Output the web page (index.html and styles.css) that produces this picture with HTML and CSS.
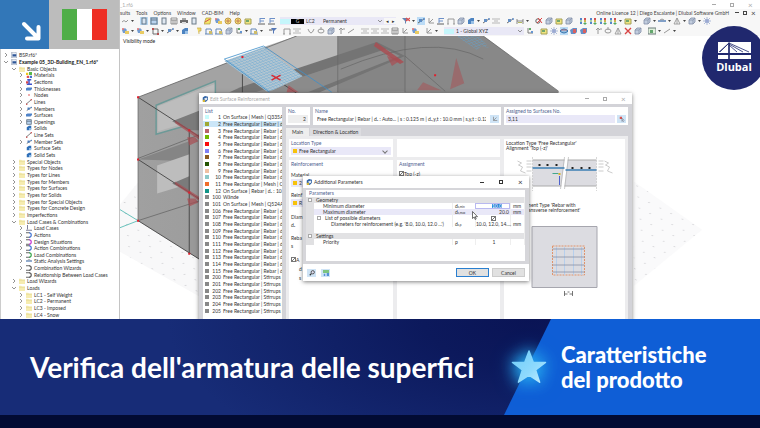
FILE: index.html
```html
<!DOCTYPE html>
<html lang="it">
<head>
<meta charset="utf-8">
<meta name="viewport" content="width=device-width, initial-scale=1">
<title>Verifica dell'armatura delle superfici</title>
<link rel="stylesheet" href="styles.css">
</head>
<body>
<svg class="defs" aria-hidden="true">
  <symbol id="i-redo" viewBox="0 0 8 8"><path d="M1 5q2-3 4 0l2-2" fill="none" stroke="#888"/></symbol>
  <symbol id="i-panel" viewBox="0 0 8 8"><rect x="2" y="1" width="4" height="6" fill="#dde6f0" stroke="#567"/></symbol>
  <symbol id="i-panelw" viewBox="0 0 8 8"><rect x="1" y="1" width="6" height="6" fill="#b9d3ee" stroke="#567"/><path d="M1 3h6" stroke="#567"/></symbol>
  <symbol id="i-table" viewBox="0 0 8 8"><path d="M1 1h6v6H1zM1 3h6M3 3v4M5 3v4" fill="none" stroke="#666" stroke-width=".8"/></symbol>
  <symbol id="i-print" viewBox="0 0 8 8"><path d="M2 1h4v2H2z" fill="#999"/><path d="M0 3h8v3H0z" fill="#555"/><path d="M2 5h4v2H2z" fill="#ddd"/></symbol>
  <symbol id="i-yel" viewBox="0 0 8 8"><path d="M2 1h5L6 7H0z" fill="#f3e14e" stroke="#a58a20" stroke-width=".7"/><path d="M1 5l5-3" stroke="#c33"/></symbol>
  <symbol id="i-yelr" viewBox="0 0 8 8"><circle cx="4" cy="4" r="3" fill="#f6e05c" stroke="#b78a30"/><path d="M2 4h4M4 2v4" stroke="#b0503a" stroke-width=".8"/></symbol>
  <symbol id="i-yelg" viewBox="0 0 8 8"><path d="M1 2h6v5H1z" fill="#f1e36b" stroke="#97903c"/><path d="M2 3h3v2H2z" fill="#5c9a54"/></symbol>
  <symbol id="i-load" viewBox="0 0 8 8"><path d="M2 1v5M2 1.500h5M2 4h4" stroke="#557fc0" fill="none"/><path d="M0 7h7" stroke="#444"/></symbol>
  <symbol id="i-cube" viewBox="0 0 8 8"><path d="M1 3l2-2h4v4L5 7H1z" fill="#b9c6da" stroke="#6d7c99" stroke-width=".8"/><path d="M1 3h4v4M5 3l2-2" fill="none" stroke="#6d7c99" stroke-width=".7"/></symbol>
  <symbol id="i-blue" viewBox="0 0 8 8"><path d="M1 3l3-2h3v4L4 7H1z" fill="#2f6fb8"/><path d="M4 4h3v3H4z" fill="#8bb8e4"/></symbol>
  <symbol id="i-filter" viewBox="0 0 8 8"><path d="M0 1h6L4 4v3L3 6V4z" fill="#4d6fa5"/><path d="M4 1l4 3M8 1L4 4" stroke="#d92d2d" stroke-width="1.200"/></symbol>
  <symbol id="i-filterb" viewBox="0 0 8 8"><path d="M2 1h6L5 4v3L4 6V4z" fill="#3b63ad"/><path d="M0 3h3" stroke="#333"/></symbol>
  <symbol id="i-beam" viewBox="0 0 8 8"><path d="M1 6l6-4" stroke="#555"/><path d="M2 2h3v3H2z" fill="#4b7dbc"/><circle cx="7" cy="2" r="1" fill="#4b7dbc"/></symbol>
  <symbol id="i-frame" viewBox="0 0 8 8"><path d="M1 7V2h6v5M0 7h2M6 7h2" fill="none" stroke="#888"/></symbol>
  <symbol id="i-grid" viewBox="0 0 8 8"><path d="M0 2h8M0 6h8M2 4h4" stroke="#999" stroke-width=".8"/></symbol>
  <symbol id="i-node" viewBox="0 0 8 8"><path d="M1 3l3-2 2 2-2 3H2z" fill="#5b8ccb"/><path d="M4 4h4v3H4z" fill="#e7c449"/><circle cx="2" cy="2" r="1" fill="#d55"/></symbol>
  <symbol id="i-nodes" viewBox="0 0 8 8"><path d="M2 2h5v5H2z" fill="none" stroke="#555"/><path d="M1 1h2v2H1zM6 6h2v2H6z" fill="#a33"/></symbol>
  <symbol id="i-flag" viewBox="0 0 8 8"><path d="M2 1h4v3H4v3" fill="#f0d452" stroke="#b99a2d" stroke-width=".7"/></symbol>
  <symbol id="i-mem" viewBox="0 0 8 8"><path d="M1 7V2h5l1 4M0 7h8" fill="none" stroke="#4b74ad"/><path d="M4 4h3v3H4z" fill="#c9b250"/></symbol>
  <symbol id="i-green" viewBox="0 0 8 8"><path d="M2 1v5h5" fill="none" stroke="#666"/><path d="M3 1h2v2H3z" fill="#44a04b"/><path d="M5 4h2v2H5z" fill="#4c86cc"/></symbol>
  <symbol id="i-axis" viewBox="0 0 8 8"><path d="M2 1v5h5M2 6L6 2" fill="none" stroke="#888"/></symbol>
  <symbol id="i-zoomx" viewBox="0 0 8 8"><circle cx="3" cy="4" r="2.200" fill="none" stroke="#444"/><path d="M3 1l4 5M7 1L2 6" stroke="#d22"/></symbol>
  <symbol id="i-find" viewBox="0 0 8 8"><circle cx="5" cy="3" r="2.200" fill="#dde" stroke="#333"/><path d="M3 5L1 7" stroke="#333" stroke-width="1.500"/></symbol>
  <symbol id="i-pick" viewBox="0 0 8 8"><path d="M1 1h3v3H1z" fill="#d9534f"/><path d="M4 3v4l1-1 1 2M4 3l3 3" fill="none" stroke="#667" stroke-width=".8"/></symbol>
  <symbol id="i-xyz" viewBox="0 0 8 8"><path d="M1 1h2v2H1zM1 5h2v2H1z" fill="#3973c4"/><path d="M5 1h2v2H5z" fill="#c33"/><path d="M5 3h2v2H5z" fill="#caa92e"/><path d="M5 6h2v1H5zM2 3v2" fill="#3a9b48" stroke="#3a9b48"/></symbol>
  <symbol id="i-wave" viewBox="0 0 8 8"><path d="M0 4h8" stroke="#3f6fae" stroke-width="1.500"/><path d="M2 3l2-1 2 1" stroke="#888" fill="none"/></symbol>
  <symbol id="i-curve" viewBox="0 0 8 8"><path d="M1 2q3 8 6 0" fill="none" stroke="#888"/></symbol>
  <symbol id="i-arrow" viewBox="0 0 8 8"><path d="M4 7V2M2 3l2-2 2 2M6 2h2" fill="none" stroke="#888"/></symbol>
  <symbol id="i-line" viewBox="0 0 8 8"><path d="M1 6l6-4" stroke="#888"/></symbol>
  <symbol id="i-dim" viewBox="0 0 8 8"><path d="M1 2v5M7 2v5M1 4h6" stroke="#555" stroke-width=".8"/><path d="M2 5h4v1H2z" fill="#a7ad48"/></symbol>
  <symbol id="i-star" viewBox="0 0 8 8"><path d="M4 0v8M0 4h8M1 1l6 6M7 1L1 7" stroke="#7d92c4" stroke-width=".7"/><circle cx="4" cy="4" r="2" fill="#8b9ccc"/></symbol>
  <symbol id="i-redcube" viewBox="0 0 8 8"><path d="M0 3l3-2h4v4L5 7H1z" fill="#4d7fc0"/><path d="M3 2h3v4H3z" fill="#d24848"/></symbol>
  <symbol id="i-eye" viewBox="0 0 8 8"><path d="M0 4q4-4 8 0-4 4-8 0z" fill="#8fb9dc" stroke="#205f9d"/><path d="M1 3h6" stroke="#c55" stroke-width=".8"/></symbol>
  <symbol id="i-x" viewBox="0 0 8 8"><path d="M1 1l6 6M7 1L1 7" stroke="#d32626" stroke-width="1.400"/></symbol>
  <symbol id="i-tri" viewBox="0 0 8 8"><path d="M4 1L1 7h6zM4 1v6" fill="none" stroke="#888" stroke-width=".9"/></symbol>
  <symbol id="i-loop" viewBox="0 0 8 8"><ellipse cx="4" cy="4" rx="3" ry="2" fill="none" stroke="#888"/><path d="M4 0v3" stroke="#888"/></symbol>
  <symbol id="i-pic" viewBox="0 0 8 8"><path d="M0 1h8v6H0z" fill="#dff0d9" stroke="#566"/><path d="M2 3h3v3H2z" fill="#4a9a55"/></symbol>
  <symbol id="i-units" viewBox="0 0 8 8"><path d="M0 0h8v4H0z" fill="#7cc47f"/><path d="M1 5h2v3H1zM5 4h3v4H5z" fill="#5591d6"/></symbol>
  <symbol id="i-folder" viewBox="0 0 8 8"><path d="M0 1h3l1 1h4v6H0z" fill="#f6ecb0"/><path d="M0 3h8" stroke="#e3d68c" stroke-width=".8"/></symbol>
  <symbol id="i-model" viewBox="0 0 8 8"><path d="M1 0h5l2 2v6H1z" fill="#e9edf4" stroke="#7c8aa0" stroke-width=".8"/><path d="M2 3h5v3H2z" fill="#2e5697"/></symbol>
  <symbol id="i-mat" viewBox="0 0 8 8"><path d="M0 1h3v3H0z" fill="#f0c81e"/><path d="M4 0h4v4H4z" fill="#59b84c"/><path d="M1 5h3v3H1z" fill="#e4514e"/><path d="M5 5h3v3H5z" fill="#4773cc"/></symbol>
  <symbol id="i-sec" viewBox="0 0 8 8"><path d="M2 0h5v2H5v4h3v2H1V6h2V2H1z" fill="#4052c9"/><path d="M0 3h3v3H0z" fill="#d8484b"/></symbol>
  <symbol id="i-thick" viewBox="0 0 8 8"><path d="M0 3l2-1h6v2L6 6H0z" fill="#4f83c8"/></symbol>
  <symbol id="i-dot" viewBox="0 0 8 8"><circle cx="4" cy="4" r="1" fill="#d33"/></symbol>
  <symbol id="i-ln" viewBox="0 0 8 8"><path d="M0 7l7-6" stroke="#555"/><circle cx="1" cy="7" r="1" fill="#c44"/><circle cx="7" cy="1" r="1" fill="#c44"/></symbol>
  <symbol id="i-case" viewBox="0 0 8 8"><path d="M2 0v6M0 7h8" stroke="#557" fill="none"/></symbol>
  <symbol id="i-comb" viewBox="0 0 8 8"><path d="M0 1h5M0 7h5" stroke="#333"/><path d="M4 1q3 0 3 3t-3 3" fill="none" stroke="currentColor" stroke-width="1.500"/></symbol>
  <symbol id="i-app" viewBox="0 0 8 8"><path d="M1 2l3-2 4 1v4L5 8 1 6z" fill="#2f62a5"/><path d="M3 3l4-1v3L4 6z" fill="#dfe8f3"/><path d="M1 5h3v3H1z" fill="#d4b63c"/></symbol>
</svg>

<main class="stage">
  <aside class="sidebar"><ul class="tree" id="tree"></ul></aside>

  <section class="work">
    <header class="chrome">
      <div class="caption"><span>_1.rf6</span><span class="win muted"><i class="min"></i><i class="max"></i><i class="cls">×</i></span></div>
      <nav class="menu">
        <a href="#">sults</a><a href="#">Tools</a><a href="#">Options</a><a href="#">Window</a><a href="#">CAD-BIM</a><a href="#">Help</a>
        <span class="licence">Online Licence 12 | Diego Escalante | Dlubal Software GmbH</span>
        <span class="win"><i class="min"></i><i class="max"></i><i class="cls">×</i></span>
      </nav>
      <div class="bar" id="bar1"></div>
      <div class="bar" id="bar2"></div>
    </header>
    <div class="view">
      <svg class="scene" viewBox="120 37 640 282" preserveAspectRatio="xMinYMin slice" aria-hidden="true">
        <defs>
          <pattern id="dots" width="11" height="11" patternUnits="userSpaceOnUse" patternTransform="matrix(1 .5 -.9 .5 0 0)"><circle cx="5" cy="5" r=".6" fill="#c4c4c8"/></pattern>
          <pattern id="mesh" width="3" height="3" patternUnits="userSpaceOnUse" patternTransform="matrix(.94 -.36 .8 .58 0 0)"><path d="M0 0h3M0 0v3" stroke="#5ea3d2" stroke-width=".7"/></pattern>
          <linearGradient id="wall" x1="0" x2="1"><stop offset="0" stop-color="#a0a0a0"/><stop offset="1" stop-color="#8a8a8a"/></linearGradient>
        </defs>
        <path d="M120 205l18-22 62 40v74l-80-45z" fill="#f8f8f9"/>
        <path d="M120 205l18-22 62 40v74l-80-45z" fill="url(#dots)"/>
        <path d="M632 182l68 48-68 56z" fill="#fafafb"/>
        <path d="M632 182l68 48-68 56z" fill="url(#dots)"/>
        <path d="M138 98L296 37h186l75 55v70H200v98l-62-39z" fill="url(#wall)"/>
        <path d="M138 98L296 37h41v26l-95 36-42 39z" fill="#a3a3a3"/>
        <path d="M263 48l33-11h41v25l-42 15-32-29z" fill="#bababa"/>
        <path d="M337 37h67v55l-67 1z" fill="#858585"/>
        <path d="M404 37h78l75 56H404z" fill="#888"/>
        <path d="M240 88l136-45 28 14-85 36h-90z" fill="#747474"/>
        <path d="M255 93l130-43 14 7-92 36z" fill="#8b8b8b"/>
        <path d="M138 160l62-22v24l-62-2z" fill="#858585"/>
        <path d="M156 106l59-24v36l-59 17z" fill="#b2b2b2" stroke="#6c9997" stroke-width="1.500"/>
        <path d="M158 107l56-22v30l-56 17z" fill="#bdbdbd"/>
        <path d="M157 166l43-15v30l-43 13z" fill="#bdbdbd"/>
        <path d="M172 122l28-11v27zM172 184l28-12v27z" fill="#7b7b7b"/>
        <path d="M189 131h11v129l-11-7z" fill="#999"/>
        <path d="M138 98L296 37M138 98v123M138 159l62-24M138 221l62-20" fill="none" stroke="#686868" stroke-width=".8"/>
        <path d="M138 98l62 40M138 160l62 40M138 221l62 39M189 131v123M242 58l54 36M242 58v35" fill="none" stroke="#444" stroke-width=".9"/>
        <path d="M337 37v56M404 37v56M340 70q90-38 142-10M404 57l40 35M482 37l75 55" fill="none" stroke="#666" stroke-width=".7"/>
        <g fill="#a94d52">
          <path d="M375 43l28 20-4 2-26-18z" opacity=".85"/><path d="M386 57l14 4-9 6zM288 86l10 7h-12zM175 121l25 16v4l-25-17zM187 138h8l3 4-9 4zM175 182l25 16v4l-25-17zM187 199h8l3 4-9 4z" opacity=".7"/>
          <path d="M455 59l-6 31 14-6zM416 91l6-8 18 8z" opacity=".5"/>
        </g>
        <path d="M224 62l39-14 39 29-30 14-6 1z" fill="#b4c6d1"/>
        <path d="M224 62l39-14 39 29-30 14-6 1z" fill="url(#mesh)"/>
        <path d="M224 60l39-13 68 46M224 60l45 33" fill="none" stroke="#3d8fc9" stroke-width=".8"/>
        <path d="M271 76l9 5m-9 0l9-5" stroke="#d52c35" stroke-width="1.500"/>
        <path d="M455 37h23l10 12-8-2-4 4z" fill="url(#mesh)"/>
        <path d="M120 210l18 11-18 7" fill="none" stroke="#45b5ae" stroke-width=".8"/>
        <path d="M137 97h2v2h-2zM137 159h2v2h-2zM137 220h2v2h-2zM241 57h2v2h-2zM188 130h2v2h-2zM188 192h2v2h-2zM188 253h2v2h-2zM433 75h2v2h-2z" fill="#e01f2d"/>
      </svg>
      <p class="mode">Visibility mode</p>
    </div>
  </section>

  <section class="window editor" aria-label="Edit Surface Reinforcement">
    <header class="wtitle muted"><svg class="ic"><use href="#i-app"/></svg><span>Edit Surface Reinforcement</span><span class="win"><i class="min"></i><i class="max"></i><i class="cls">×</i></span></header>
    <div class="ebody">
      <div class="panel listpanel"><h3>List</h3><ul class="list" id="list"></ul></div>
      <div class="eright">
        <div class="heads">
          <div class="panel"><label for="no">No.</label><input id="no" class="grey" value="2"></div>
          <div class="panel"><label for="nm">Name</label><div class="line"><input id="nm" value="Free Rectangular | Rebar | dₛ : Auto... | s : 0.125 m | dₛ,y,t : 10.0 mm | s,y,t : 0.125 m | Top"><button class="sq" aria-label="Edit name"><svg class="ic"><use href="#i-axis"/></svg></button></div></div>
          <div class="panel"><label for="as">Assigned to Surfaces No.</label><div class="line"><input id="as" class="lilac" value="3,11"><button class="sq" aria-label="Select"><svg class="ic"><use href="#i-pick"/></svg></button></div></div>
        </div>
        <div class="tabs"><button class="on">Main</button><button>Direction &amp; Location</button></div>
        <div class="content">
          <div class="col">
            <div class="panel top"><label for="lt">Location Type</label><div class="pick"><b class="sw"></b><select id="lt"><option>Free Rectangular</option></select></div></div>
            <div class="panel fill"><h3>Reinforcement</h3>
              <label class="blk" for="mt">Material</label><div class="pick"><b class="sw"></b><select id="mt"><option>2</option></select></div>
              <label class="blk" for="rt">Reinf</label><div class="pick"><b class="sw"></b><select id="rt"><option>R</option></select></div>
              <p class="blk">Diam</p><p class="in">dₛ</p><p class="blk">Reba</p><p class="in">s</p>
              <label class="chk"><input type="checkbox" checked>A</label><p class="sub">d</p><p class="sub">s</p>
            </div>
          </div>
          <div class="col">
            <div class="panel top"></div>
            <div class="panel fill"><h3>Assignment</h3><label class="chk tight"><input type="checkbox" checked>Top (-z)</label></div>
          </div>
          <div class="panel preview">
            <p>Location Type 'Free Rectangular'<br>Alignment 'Top (-z)'</p>
            <svg viewBox="507 152 116 52" class="sect" aria-hidden="true">
              <path d="M533 161h64v26h-64z" fill="#dcdce1"/><path d="M533 161h64M533 187h64" stroke="#aaa"/>
              <path d="M533 158v34M597 158v34" stroke="#c7c7c7" stroke-dasharray="2 1" stroke-width=".7"/>
              <path d="M567 158l-4 32" stroke="#fff" stroke-width="3"/><path d="M569 158l-4 32M565 158l-4 32" stroke="#aaa" stroke-width=".6"/>
              <path d="M533 169h32M566 171h31" stroke="#3c7fb4" stroke-width="1.300"/>
              <path d="M539 165h2v2h-2zM547 165h2v2h-2zM556 165h2v2h-2zM572 168h2v2h-2zM581 168h2v2h-2zM589 168h2v2h-2z" fill="#222"/>
              <path d="M553 174.500h6" stroke="#41a78c"/><path d="M559 174h2v2h-2z" fill="#d8b62c"/><path d="M560 177v9" stroke="#4e62cc"/>
              <g stroke="#aaa" stroke-width=".6" fill="none"><path d="M527 162h5M527 165h5M527 168h5M527 172h5M599 162h5M599 165h5M599 168h5M599 172h5"/><path d="M518 162l4 2-3 2 4 2-2 4 5 2M605 162l4 2-3 2 4 2-2 4 5 2"/></g>
            </svg>
            <p>Reinforcement Type 'Rebar with<br>without transverse reinforcement'</p>
            <svg viewBox="507 213 116 104" class="plan" aria-hidden="true">
              <path d="M532.500 226.500h65v61h-65z" fill="#dcdce1" stroke="#a6a6ae"/>
              <path d="M553 246h32v29h-32z" fill="none" stroke="#e0946c" stroke-dasharray="2 1"/>
              <path d="M557 247v28M565 247v28M574 247v28M582 247v28" stroke="#b7cfec"/><path d="M553 249h32M553 257h32M553 265h32M553 272h32" stroke="#8991a5" stroke-width=".8"/>
              <path d="M565 291v5M573 291v5M565 294h3M570 294h3M568 292h2" stroke="#555" stroke-width=".8"/>
            </svg>
          </div>
        </div>
      </div>
    </div>
  </section>

  <section class="window params" aria-label="Additional Parameters">
    <header class="wtitle"><svg class="ic"><use href="#i-app"/></svg><span>Additional Parameters</span><span class="win"><i class="min"></i><i class="max"></i><i class="cls">×</i></span></header>
    <div class="pbody"><h3>Parameters</h3>
      <table>
        <colgroup><col class="c-tree"><col><col class="c-sym"><col class="c-val"><col class="c-unit"></colgroup>
        <tr class="grp"><th><i class="pm"></i></th><td colspan="4">Geometry</td></tr>
        <tr><th></th><td class="l1">Minimum diameter</td><td>d<sub>s,min</sub></td><td class="v ed"><input aria-label="Minimum diameter" value="10.0"></td><td>mm</td></tr>
        <tr class="hot"><th></th><td class="l1">Maximum diameter</td><td>d<sub>s,max</sub></td><td class="v">20.0</td><td>mm</td></tr>
        <tr><th></th><td class="l0"><i class="pm"></i>List of possible diameters</td><td></td><td class="c"><input type="checkbox" checked aria-label="List of possible diameters"></td><td></td></tr>
        <tr><th></th><td class="l2">Diameters for reinforcement (e.g. '8.0, 10.0, 12.0 ...')</td><td>d<sub>s,p</sub></td><td class="v">10.0, 12.0, 14....</td><td>mm</td></tr>
        <tr><th></th><td colspan="4"></td></tr>
        <tr class="grp"><th><i class="pm"></i></th><td colspan="4">Settings</td></tr>
        <tr><th></th><td class="l1">Priority</td><td>p</td><td class="c">1</td><td></td></tr>
      </table>
    </div>
    <footer>
      <button class="sq" aria-label="Details"><svg class="ic"><use href="#i-find"/></svg></button>
      <button class="sq" aria-label="Units"><svg class="ic"><use href="#i-units"/></svg></button>
      <span class="grow"></span><button class="push ok">OK</button><button class="push">Cancel</button>
    </footer>
    <svg class="cursor" viewBox="0 0 6 9" aria-hidden="true"><path d="M.5.5v7l1.700-1.500 1 2.500 1-.5-1-2.300H5.500z" fill="#fff" stroke="#333" stroke-width=".7"/></svg>
  </section>

  <div class="corner">
    <div class="arrow"><svg viewBox="0 0 49 49"><path d="M24 24l14 14M27 38.500h11.500V27" fill="none" stroke="#fff" stroke-width="4" stroke-linecap="round" stroke-linejoin="round"/></svg></div>
    <div class="flagbox"><div class="flag"><i></i><i></i><i></i></div></div>
  </div>
  <div class="brand">
    <svg viewBox="0 0 33 17" aria-hidden="true"><path d="M0 0h33v11H0zM0 13h33v4H0z" fill="#fff"/><path d="M11 0v17M1 10l10-9 20 9M11 1L2 10M11 2l14 8M11 3l8 7" stroke="#20286e" stroke-width=".8" fill="none"/><path d="M11 1v16" stroke="#20286e" stroke-width="1.500"/></svg>
    <span>Dlubal</span>
  </div>
</main>

<section class="banner">
  <h1>Verifica dell'armatura delle superfici</h1>
  <div class="topic">
    <svg class="star" viewBox="0 0 36 36" aria-hidden="true"><defs><linearGradient id="sg" x1="0" y1="0" x2="1" y2="1"><stop offset="0" stop-color="#6fcdf8"/><stop offset=".6" stop-color="#8fdafd"/><stop offset="1" stop-color="#c2edff"/></linearGradient></defs><path d="M18 2l4.200 11.300 12.300.2-9.900 7.500 4 12.200L18 26.200 7.400 33.200l4-12.200L1.500 13.500l12.300-.2z" fill="url(#sg)" stroke="url(#sg)" stroke-width="1.500" stroke-linejoin="round"/></svg>
    <h2>Caratteristiche<br>del prodotto</h2>
  </div>
</section>
<div class="strip"></div>
<script src="app.js"></script>
</body>
</html>
```

FILE: styles.css
```css
* { box-sizing: border-box; margin: 0; padding: 0; }
html, body { height: 100%; }
body { display: flex; flex-direction: column; overflow: hidden; background: #fff; color: #333; font: 5px/6px Lato, "Open Sans", sans-serif; }
ul { list-style: none; }
a { color: inherit; text-decoration: none; }
button, input, select { font: inherit; color: inherit; border: 0; background: none; min-width: 0; border-radius: 0; }
select { appearance: none; }
i, b { font-style: normal; }
h3, label { font-weight: 400; font-size: 5px; color: #4f6190; }
.defs { position: absolute; width: 0; height: 0; }
.ic { width: 8px; height: 8px; display: block; flex: none; }

.stage { position: relative; flex: 1; min-height: 0; display: flex; overflow: hidden; }
.sidebar { width: 120px; flex: none; display: flex; border-left: 1px solid #ccc; border-right: 1px solid #c4c4c4; padding: 52px 0 1px; background: #fff; }
.tree { flex: 1; display: grid; grid-auto-rows: 1fr; }
.tree li { display: flex; align-items: center; gap: 1px; min-height: 0; white-space: nowrap; padding-left: 3px; }
.tree li.l1 { padding-left: 11px; }
.tree li.l2 { padding-left: 18px; }
.tree .ic { width: 6px; height: 6px; margin-right: 1px; }
.tree .strong { font-weight: 700; color: #111; }
.chev { width: 6px; height: 4px; flex: none; display: flex; }
.chev svg { width: 4px; height: 4px; }

.work { flex: 1; min-width: 0; display: flex; flex-direction: column; }
.chrome { background: #f7f7f7; }
.caption { display: flex; justify-content: space-between; height: 9px; align-items: center; background: #fff; color: #aaa; padding-right: 7px; }
.menu { display: flex; align-items: center; gap: 6px; height: 7px; padding-right: 4px; color: #444; }
.licence { margin-left: auto; white-space: nowrap; }
.win { display: flex; align-items: center; gap: 4px; margin-left: auto; }
.win i { width: 4px; height: 4px; }
.win .min { border-bottom: 1px solid currentColor; height: 1px; }
.win .max { border: 1px solid currentColor; }
.win .cls { font-size: 8px; line-height: 4px; width: 5px; }
.caption .win { gap: 14px; }
.menu .win { margin-left: 0; }
.muted { color: #aaa; }

.bar { display: flex; align-items: center; gap: 6px; height: 10px; padding-left: 1px; }
.bar .grp { display: flex; align-items: center; gap: 2px; }
.tool { width: 8px; height: 8px; display: block; flex: none; }
.tool .ic { opacity: .85; }
.tool.on { background: #bcdcf6; }
.car { width: 3px; height: 2px; background: #444; clip-path: polygon(0 0, 100% 0, 50% 100%); flex: none; }
.combo { display: flex; align-items: center; height: 8px; background: #e9e8f6; }
.combo.case { width: 116px; margin-left: -2px; }
.combo.axes { width: 80px; margin-right: -4px; }
.combo .sky { width: 10px; height: 5px; background: #c5f6fb; }
.combo .g { width: 13px; background: #000; color: #ccc; text-align: center; line-height: 5px; margin: 0 2px 0 1px; }
.combo select { flex: 1; padding-left: 2px; }
.combo .lc { flex: none; width: 15px; }
.combo .nav { width: 6px; text-align: center; background: #f7f7f7; }
.combo .chev { width: 6px; }

.view { position: relative; flex: 1; min-height: 0; }
.scene { position: absolute; inset: 0; width: 100%; height: 100%; }
.mode { position: relative; padding: 2px 3px; color: #222; }

.window { position: absolute; background: #fff; display: flex; flex-direction: column; box-shadow: 0 1px 4px rgba(0, 0, 0, .5); }
.wtitle { display: flex; align-items: center; gap: 2px; flex: none; height: 11px; padding: 0 6px 0 3px; }
.wtitle .ic { width: 6px; height: 6px; }
.wtitle .win { gap: 14px; }
.editor { left: 199px; top: 93px; bottom: -8px; width: 433px; }
.ebody { flex: 1; min-height: 0; display: flex; gap: 4px; background: #d3d3d8; padding: 3px 4px 0; }
.panel { background: #fff; padding: 1px 2px; min-width: 0; }
.panel > label, .panel > h3 { display: block; }
.listpanel { width: 79px; display: flex; flex-direction: column; padding: 1px 0 13px; overflow: hidden; }
.listpanel h3 { padding-left: 2px; }
.list { flex: 1; display: grid; grid-auto-rows: 1fr; }
.list li { display: flex; align-items: center; white-space: nowrap; min-height: 0; padding-left: 2px; gap: 2px; }
.list .no { width: 10px; text-align: right; }
.list .sel { background: #cbe6f8; }
.swatch { width: 4px; height: 4px; flex: none; }

.eright { flex: 1; min-width: 0; display: flex; flex-direction: column; }
.heads { display: grid; grid-template-columns: 24px 188px 1fr; gap: 3px; height: 18px; }
.heads input { height: 8px; width: 100%; padding: 0 2px; margin-top: 1px; }
.heads .grey { background: #eee; text-align: right; }
.heads .lilac { background: #e9e8f8; }
.line { display: flex; gap: 2px; align-items: center; }
.sq { width: 9px; height: 8px; flex: none; background: #cfe4f6; display: grid; place-items: center; }
.sq .ic { width: 6px; height: 6px; }
.tabs { display: flex; gap: 1px; margin-top: 3px; }
.tabs button { padding: 1px 3px; background: #dcdce0; height: 8px; line-height: 6px; }
.tabs .on { background: #eee; padding: 1px 6px; }
.content { flex: 1; min-height: 0; display: grid; grid-template-columns: 104px 103px 1fr; gap: 4px; background: #ececee; padding: 3px 3px 0; }
.col { display: flex; flex-direction: column; gap: 3px; min-height: 0; }
.top { height: 18px; }
.fill { flex: 1; }
.pick { display: flex; align-items: center; gap: 2px; background: #e9e8f8; height: 8px; padding: 0 2px; margin-top: 1px; }
.pick::after { content: ""; width: 3px; height: 3px; border: solid #777; border-width: 0 1px 1px 0; transform: rotate(45deg); margin-right: 2px; }
.pick select { flex: 1; height: 8px; }
.sw { width: 4px; height: 4px; background: #f7c20c; }
.blk { display: block; margin-top: 5px; color: #333; }
.in { margin-top: 2px; }
.fill p.blk { margin-top: 7px; }
.chk { display: flex; align-items: center; gap: 2px; color: #333; margin-top: 8px; }
.chk.tight { margin-top: 4px; }
.sub { margin: 3px 0 0 8px; }
input[type="checkbox"] { appearance: none; width: 5px; height: 5px; border: 1px solid #777; background: linear-gradient(135deg, #fff 40%, #777 40%, #777 60%, #fff 60%); }
.preview { display: flex; flex-direction: column; line-height: 5px; padding: 2px; white-space: nowrap; overflow: hidden; }
.preview svg { width: 100%; flex: none; }
.sect { height: 52px; }
.plan { height: 104px; }

.params { left: 303px; top: 176px; width: 226px; background: #fff; }
.params .wtitle { height: 12px; }
.params .win { gap: 15px; }
.pbody { background: #d6d6da; padding: 2px 4px 3px 3px; }
.pbody h3 { background: #fff; padding-left: 3px; height: 7px; }
table { width: 100%; border-collapse: collapse; table-layout: fixed; background: #fff; border-bottom: 16px solid #fff; }
.c-tree { width: 8px; }
.c-sym { width: 23px; }
.c-val { width: 35px; }
.c-unit { width: 14px; }
tr { height: 6px; }
th { background: #e0e0e2; font-weight: 400; line-height: 4px; }
td { padding: 0 0 0 2px; line-height: 6px; border-right: 1px solid #eee; white-space: nowrap; }
.grp td { background: #e2e2e4; }
.hot td { background: #e9e8f8; }
td.l0 { padding-left: 3px; }
td.l1 { padding-left: 9px; }
td.l2 { padding-left: 17px; }
td.v { text-align: right; padding: 0 1px 0 0; }
td.c { text-align: center; }
td.ed { outline: 1px solid #b9b9f0; outline-offset: -1px; }
.ed input { display: block; width: 10px; height: 5px; margin: 0 7px 0 auto; background: #2884d8; color: #fff; line-height: 5px; }
sub { font-size: 3px; line-height: 3px; vertical-align: baseline; }
.pm { display: inline-block; width: 4px; height: 4px; border: 1px solid #aaa; background: #fff; vertical-align: top; }
.l0 .pm { margin: 1px 4px 0 0; }
.c input { display: block; margin: 0 auto; }
.params footer { display: flex; gap: 3px; align-items: center; padding: 4px; }
.params footer .sq + .sq { margin-left: 2px; }
.grow { flex: 1; }
.push { width: 33px; height: 9px; background: #e1e1e1; border: 1px solid #ccc; line-height: 6px; text-align: center; }
.push.ok { border-color: #2a7fd0; }
.cursor { position: absolute; left: 169px; top: 35px; width: 6px; height: 9px; }

.corner { position: absolute; left: 0; top: 0; display: flex; height: 49px; }
.arrow { width: 49px; background: #3277b8; }
.arrow svg { display: block; }
.flagbox { width: 70px; background: #bcbcbc; display: grid; place-items: center; }
.flag { display: flex; width: 45px; height: 31px; }
.flag i { flex: 1; background: #fff; }
.flag i:first-child { background: #4fae48; }
.flag i:last-child { background: #ee2e24; }
.brand { position: absolute; right: -6px; top: 26px; width: 64px; height: 64px; border-radius: 50%; background: #20286e; color: #fff; display: flex; flex-direction: column; align-items: center; justify-content: center; font: 700 11px/16px "Open Sans", sans-serif; }
.brand svg { width: 33px; height: 17px; }

.banner { position: relative; flex: none; display: flex; align-items: center; min-height: 96px; background: radial-gradient(ellipse 48% 170% at 70% 0, #0a1455 0%, #0c195c 30%, #172c77 100%); color: #fff; font-family: Lato, "Open Sans", sans-serif; }
.banner::before { content: ""; position: absolute; inset: 0 0 0 auto; width: 256px; background: #0f5ed6; clip-path: polygon(47px 0, 100% 0, 100% 100%, 0 100%); }
h1 { flex: 1; padding-left: 30px; font-size: 28px; line-height: 32px; font-weight: 700; white-space: nowrap; }
.topic { position: relative; display: flex; align-items: center; gap: 14px; width: 249px; flex: none; }
.star { width: 36px; height: 36px; flex: none; overflow: visible; filter: drop-shadow(0 0 8px #29b4f5) drop-shadow(0 0 8px #1f8fe0); }
h2 { font-size: 22px; line-height: 25px; font-weight: 900; white-space: nowrap; }
.strip { flex: none; height: 13px; background: #020b33; }
```

FILE: app.js
```js
const icon = (name, color) =>
  `<svg class="ic"${color ? ` style="color:${color}"` : ""}><use href="#i-${name}"/></svg>`;

const chevron = open =>
  `<span class="chev">${open === null ? "" : `<svg viewBox="0 0 4 4"><path d="${open ? "M0 1l2 2 2-2" : "M1 0l2 2-2 2"}" fill="none" stroke="#777" stroke-width=".8"/></svg>`}</span>`;

// level, open state (null: leaf), icon, label, icon colour
const tree = [
  [0, 0, "model", "BSP.rf6*"], [0, 1, "model", "Example 05_3D-Building_EN_1.rf6*"],
  [1, 1, "folder", "Basic Objects"],
  [2, 0, "mat", "Materials"], [2, 0, "sec", "Sections"], [2, 0, "thick", "Thicknesses"], [2, 0, "dot", "Nodes"],
  [2, 0, "ln", "Lines"], [2, 0, "beam", "Members"], [2, 0, "thick", "Surfaces"], [2, 0, "panelw", "Openings"],
  [2, null, "blue", "Solids"], [2, null, "ln", "Line Sets"], [2, 0, "beam", "Member Sets"],
  [2, null, "blue", "Surface Sets"], [2, null, "blue", "Solid Sets"],
  [1, 0, "folder", "Special Objects"], [1, 0, "folder", "Types for Nodes"], [1, 0, "folder", "Types for Lines"],
  [1, 0, "folder", "Types for Members"], [1, 0, "folder", "Types for Surfaces"], [1, 0, "folder", "Types for Solids"],
  [1, 0, "folder", "Types for Special Objects"], [1, 0, "folder", "Types for Concrete Design"],
  [1, 0, "folder", "Imperfections"], [1, 1, "folder", "Load Cases & Combinations"],
  [2, 0, "case", "Load Cases"], [2, 0, "comb", "Actions", "#3b6fd0"], [2, 0, "comb", "Design Situations", "#c22fd0"],
  [2, 0, "comb", "Action Combinations", "#3b6fd0"], [2, 0, "comb", "Load Combinations", "#2ea043"],
  [2, 0, "wave", "Static Analysis Settings"], [2, 0, "comb", "Combination Wizards", "#555"],
  [2, null, "comb", "Relationship Between Load Cases", "#555"],
  [1, 0, "folder", "Load Wizards"], [1, 1, "folder", "Loads"],
  [2, 0, "folder", "LC1 - Self Weight"], [2, 0, "folder", "LC2 - Permanent"],
  [2, 0, "folder", "LC3 - Imposed"], [2, 0, "folder", "LC4 - Snow"]
];
document.getElementById("tree").innerHTML = tree.map(([level, open, name, label, color], i) =>
  `<li class="l${level}">${chevron(open)}${icon(name, color)}<span${i === 1 ? ' class="strong"' : ""}>${label.replace("&", "&amp;")}</span></li>`).join("");

const rebar = "Free Rectangular | Rebar | dₛ", stirrup = "Free Rectangular | Stirrups | d";
const list = [
  [1, "#c8fbfc", "On Surface | Mesh | Q335A | T"], [2, "#9fa832", rebar], [3, "#b9626a", rebar], [4, "#72b800", rebar],
  [5, "#fa0a0a", rebar], [6, "#8080f5", rebar], [7, "#8b5a1f", rebar], [8, "#235400", rebar], [9, "#f0c0a2", rebar],
  [10, "#8cc8c8", rebar], [11, "#ef6c29", "Free Rectangular | Mesh | Q2"], [12, "#119488", "On Surface | Rebar | dₛ : 10.0"],
  [100, "#888", "Wände"], [101, "#888", "On Surface | Mesh | Q524A | T"]
];
for (let n = 106; n <= 115; n++) list.push([n, "#888", rebar]);
for (let n = 200; n <= 205; n++) list.push([n, "#888", stirrup]);
document.getElementById("list").innerHTML = list.map(([no, color, label]) =>
  `<li${no === 2 ? ' class="sel"' : ""}><b class="swatch" style="background:${color}"></b><span class="no">${no}</span><span>${label}</span></li>`).join("");

// "v" is a drop-down mark, a trailing "!" marks a pressed tool
const group = names => `<div class="grp">${names.split(" ").map(n =>
  n === "v" ? '<i class="car"></i>'
    : `<button class="tool${n.endsWith("!") ? " on" : ""}" aria-label="${n.replace("!", "")}">${icon(n.replace("!", ""))}</button>`).join("")}</div>`;

const caseCombo = `<div class="combo case"><i class="sky"></i><i class="g">G</i><span class="lc">LC2</span><select aria-label="Load case"><option>Permanent</option></select>${chevron(1)}<span class="nav">◂</span><span class="nav">▸</span></div>`;
const axesCombo = `<div class="combo axes"><i class="sky"></i><select aria-label="Coordinate system"><option>1 - Global XYZ</option></select>${chevron(1)}</div>`;

document.getElementById("bar1").innerHTML =
  group("redo v") + group("panel! panelw! panel table print panel") + group("yel node yelr yelr yelg") + group("load load") +
  caseCombo + group("filter v beam! axis load frame cube blue v beam grid") + group("beam dim v") +
  group("zoomx cube yelg cube") + group("xyz xyz xyz xyz v yelg v") + group("cube v wave v tri v cube v star");
document.getElementById("bar2").innerHTML =
  group("node v node v nodes v beam v blue") + group("flag mem mem cube green v mem v") + group("filterb") + group("frame grid") +
  group("curve loop cube arrow line") + group("grid grid grid table axis node") + group("axis v") + axesCombo +
  group("green") + group("yelg star eye! redcube redcube") + group("arrow loop tri x cube") + group("pic v line v");
```
